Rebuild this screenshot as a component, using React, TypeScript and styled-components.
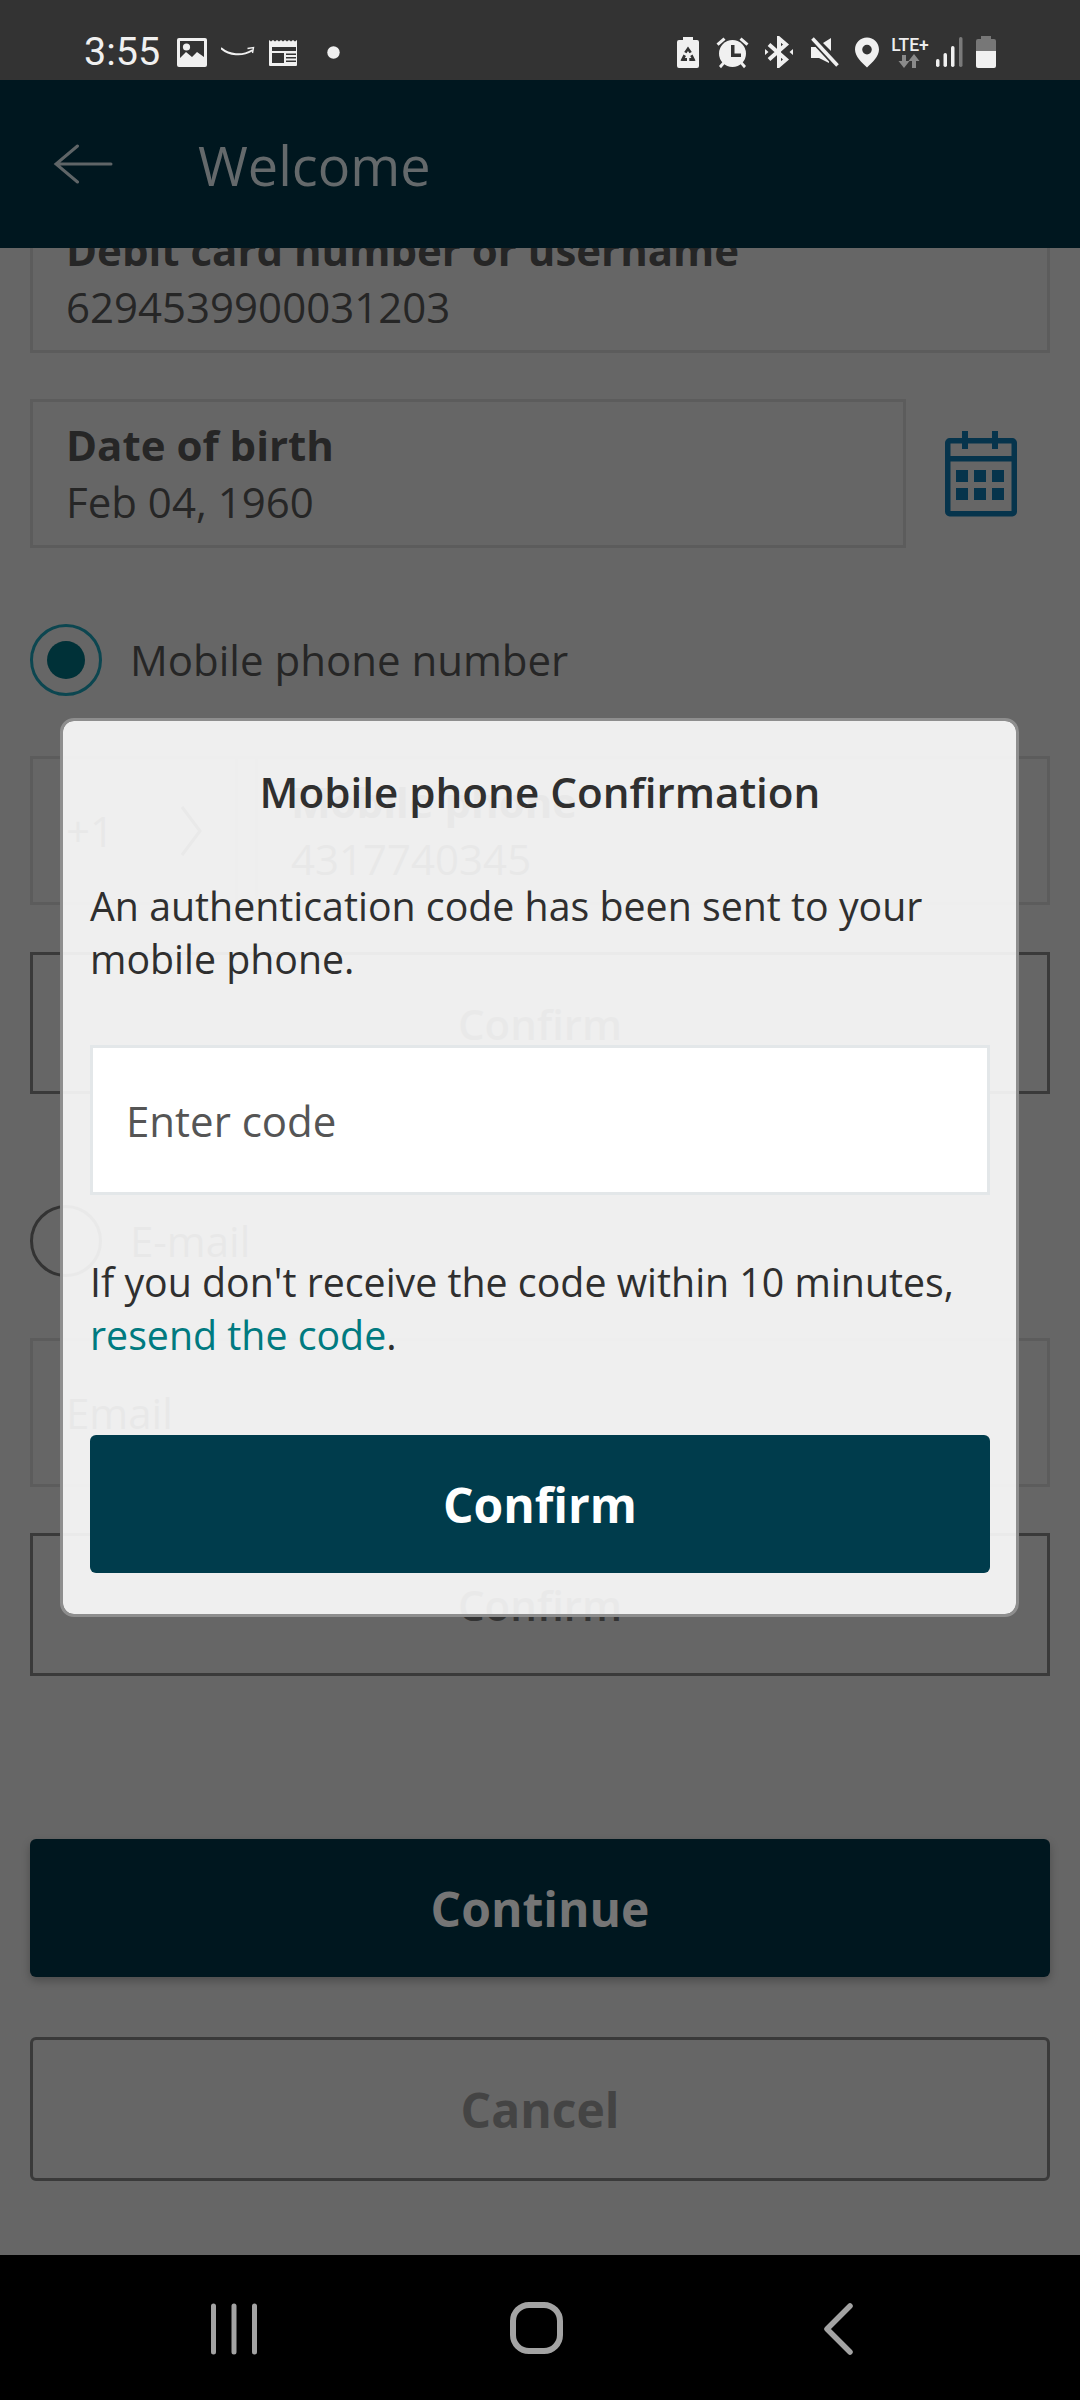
import React from "react";
import styled, { createGlobalStyle } from "styled-components";

const Global = createGlobalStyle`
  html, body { margin: 0; padding: 0; background: #666; }
  * { box-sizing: border-box; }
`;

const FONT = `"Open Sans", "Noto Sans", sans-serif`;

const Screen = styled.div`
  position: relative;
  width: 1080px;
  height: 2400px;
  overflow: hidden;
  display: flex;
  flex-direction: column;
  background: #666;
  font-family: ${FONT};
`;

const StatusBar = styled.div`
  height: 80px;
  flex: none;
  background: #333;
  display: flex;
  align-items: center;
  justify-content: space-between;
  padding: 24px 84px 0 84px;
  position: relative;
  z-index: 2;
`;
const StatusGroup = styled.div`
  display: flex;
  align-items: center;
`;
const Time = styled.span`
  font-family: Roboto, sans-serif;
  font-size: 39.5px;
  line-height: 44px;
  color: #f0f0f0;
  width: 93px;
`;
const StatusIcon = styled.svg<{ $ml?: number }>`
  display: block;
  flex: none;
  margin-left: ${(p) => p.$ml ?? 0}px;
`;
const Lte = styled.div`
  width: 36px;
  margin-left: 13px;
  display: flex;
  flex-direction: column;
  align-items: center;
`;
const LteText = styled.span`
  font-family: Roboto, sans-serif;
  font-size: 17.5px;
  line-height: 17px;
  font-weight: 500;
  color: #eee;
  white-space: nowrap;
`;

const Header = styled.header`
  height: 168px;
  flex: none;
  background: #00171f;
  display: flex;
  align-items: center;
  padding: 0 0 0 53px;
  position: relative;
  z-index: 2;
`;
const HeaderTitle = styled.h1`
  margin: 0 0 -2px 84px;
  font-size: 54px;
  line-height: 64px;
  font-weight: 400;
  color: #64696b;
`;

const Main = styled.main`
  flex: 1;
  min-height: 0;
  overflow: hidden;
`;
const Form = styled.div`
  margin-top: -44px;
  padding: 0 30px;
  display: flex;
  flex-direction: column;
`;
const FieldBox = styled.div<{ $mt?: number; $w?: number }>`
  height: 149px;
  margin-top: ${(p) => p.$mt ?? 0}px;
  width: ${(p) => (p.$w ? `${p.$w}px` : "100%")};
  flex: none;
  border: 3px solid #5c5c5c;
  padding: 0 33px;
  display: flex;
  flex-direction: column;
  justify-content: center;
`;
const Label = styled.div`
  font-size: 42px;
  line-height: 56px;
  font-weight: 700;
  color: #262626;
`;
const Value = styled.div`
  font-size: 42px;
  line-height: 58px;
  color: #262626;
`;
const DateRow = styled.div`
  margin-top: 46px;
  display: flex;
  align-items: center;
`;
const CalendarWrap = styled.div`
  margin-left: 39px;
  display: flex;
`;
const RadioRow = styled.div<{ $mt: number }>`
  margin-top: ${(p) => p.$mt}px;
  height: 72px;
  display: flex;
  align-items: center;
`;
const Radio = styled.div<{ $on?: boolean }>`
  width: 72px;
  height: 72px;
  flex: none;
  border-radius: 50%;
  border: 3px solid ${(p) => (p.$on ? "#0c4650" : "#333")};
  display: flex;
  align-items: center;
  justify-content: center;
  &::after {
    content: "";
    display: ${(p) => (p.$on ? "block" : "none")};
    width: 38px;
    height: 38px;
    border-radius: 50%;
    background: #003138;
  }
`;
const RadioLabel = styled.span`
  margin-left: 28px;
  font-size: 42px;
  line-height: 56px;
  color: #262626;
`;
const PhoneBox = styled.div`
  margin-top: 60px;
  height: 149px;
  flex: none;
  border: 3px solid #5c5c5c;
  display: flex;
`;
const Country = styled.div`
  width: 205px;
  flex: none;
  padding-left: 33px;
  border-right: 3px solid #5c5c5c;
  display: flex;
  align-items: center;
  justify-content: space-between;
  padding-right: 33px;
  font-size: 42px;
  color: #262626;
`;
const PhoneField = styled.div`
  margin-left: 17px;
  flex: 1;
  border-left: 3px solid #5c5c5c;
  padding-left: 33px;
  display: flex;
  flex-direction: column;
  justify-content: center;
`;
const OutlineButton = styled.div<{ $rounded?: boolean; $mt: number; $h: number }>`
  margin-top: ${(p) => p.$mt}px;
  height: ${(p) => p.$h}px;
  flex: none;
  border: 3px solid #3a3a3a;
  border-radius: ${(p) => (p.$rounded ? 6 : 0)}px;
  display: flex;
  align-items: center;
  justify-content: center;
  font-size: 48px;
  font-weight: 700;
  color: #444;
`;
const SolidDim = styled.div`
  margin-top: 163px;
  height: 138px;
  flex: none;
  border-radius: 6px;
  background: #00171f;
  box-shadow: 0 4px 8px rgba(0, 0, 0, 0.25);
  display: flex;
  align-items: center;
  justify-content: center;
  font-size: 48px;
  font-weight: 700;
  color: #757575;
`;
const GhostConfirm = styled.span`
  font-size: 42px;
  font-weight: 600;
  color: #333;
`;

const NavBar = styled.nav`
  height: 145px;
  flex: none;
  background: #000;
  display: flex;
  align-items: center;
  padding: 3px 0 0 204px;
  gap: 243px;
  position: relative;
  z-index: 2;
`;

const Modal = styled.section`
  position: absolute;
  left: 60px;
  top: 718px;
  width: 959px;
  height: 899px;
  z-index: 3;
  border: 3px solid #8e8e8e;
  border-radius: 14px;
  background: rgba(255, 255, 255, 0.895);
  background-clip: padding-box;
  padding: 43px 26px 0 27px;
`;
const ModalTitle = styled.h2`
  margin: 0;
  text-align: center;
  font-size: 42.2px;
  line-height: 56px;
  font-weight: 600;
  color: #2f2f2f;
`;
const ModalText = styled.p<{ $mt: number }>`
  margin: ${(p) => p.$mt}px 0 0;
  font-size: 39.3px;
  line-height: 53px;
  color: #2f2f2f;
`;
const ResendLink = styled.a`
  color: #007a80;
  text-decoration: none;
`;
const CodeInput = styled.div`
  margin-top: 59px;
  height: 150px;
  border: 3px solid #e3e7e9;
  background: #fff;
  padding-left: 33px;
  display: flex;
  align-items: center;
  font-size: 42px;
  color: #555;
`;
const ConfirmButton = styled.div`
  margin-top: 73px;
  height: 138px;
  border-radius: 6px;
  background: #003c4c;
  display: flex;
  align-items: center;
  justify-content: center;
  font-size: 48px;
  font-weight: 700;
  color: #fff;
`;

const W = "#f0f0f0";
const BG = "#333";

export default function App() {
  return (
    <Screen>
      <Global />
      <StatusBar>
        <StatusGroup>
          <Time>3:55</Time>
          <StatusIcon width="30" height="29" viewBox="0 0 30 29">
            <rect width="30" height="29" rx="2" fill={W} />
            <rect x="3" y="3" width="24" height="23" fill={BG} />
            <circle cx="9.500" cy="9" r="3.600" fill={W} />
            <path d="M3 26v-6l6-6 6 5 5-5 7 5v7z" fill={W} />
          </StatusIcon>
          <StatusIcon $ml={14} width="34" height="12" viewBox="0 0 34 12">
            <path d="M0.500 2.500C8 9 21 10.500 31 4.500" stroke={W} strokeWidth="2" fill="none" strokeLinecap="round" />
            <path d="M26.500 2.500l6-1-1 5.500" stroke={W} strokeWidth="1.400" fill="none" />
          </StatusIcon>
          <StatusIcon $ml={14} width="30" height="27" viewBox="0 0 30 27">
            <path d="M0 26V1l2 1.500 2-1.500 2 1.500 2-1.500 2 1.500 2-1.500 2 1.500 2-1.500 2 1.500 2-1.500 2 1.500 2-1.500 2 1.500 2-1.500V26a1 1 0 0 1-1 1H1a1 1 0 0 1-1-1z" fill={W} />
            <rect x="3" y="8" width="24" height="4" fill={BG} />
            <rect x="3" y="14" width="12" height="10" fill={BG} />
            <path d="M17 14.500h10v1.600H17zM17 18h10v1.600H17zM17 21.500h10v1.600H17z" fill={BG} />
          </StatusIcon>
          <StatusIcon $ml={28} width="13" height="13" viewBox="0 0 13 13">
            <circle cx="6.500" cy="6.500" r="6.200" fill={W} />
          </StatusIcon>
        </StatusGroup>
        <StatusGroup>
          <StatusIcon width="22" height="31" viewBox="0 0 22 31">
            <path d="M6 0h10v3h4a2 2 0 0 1 2 2v24a2 2 0 0 1-2 2H2a2 2 0 0 1-2-2V5a2 2 0 0 1 2-2h4z" fill={W} />
            <path d="M11 9.500l3.800 5.500-2.300 1.300L11 14l-1.500 2.300L7.200 15zM3.500 23.500l3-6 2.500 1.500-1.200 2H10v3H4.500zM18.500 23.500l-3-6-2.300 1.500 1.200 2H12.300v3h5.200z" fill={BG} />
          </StatusIcon>
          <StatusIcon $ml={17} width="33" height="33" viewBox="0 0 33 33">
            <circle cx="16.500" cy="17.500" r="13.500" fill={W} />
            <path d="M15 9h3.500v8.500H25V21H15z" fill={BG} />
            <path d="M0.500 7.500L7.500 1.500l2 2.300-7 6zM32.500 7.500L25.500 1.500l-2 2.300 7 6z" fill={W} />
            <path d="M3 30l4-4.500 2.200 1.800-4.200 5zM30 30l-4-4.500-2.200 1.800 4.200 5z" fill={W} />
          </StatusIcon>
          <StatusIcon $ml={16} width="28" height="32" viewBox="0 0 28 32">
            <path d="M4 8.500L21 23.500l-7 6V2.500l7 6L4 23.500" stroke={W} strokeWidth="4" fill="none" />
            <path d="M0 13l3.500 3L0 19zM28 13l-3.500 3 3.500 3z" fill={W} />
          </StatusIcon>
          <StatusIcon $ml={18} width="28" height="31" viewBox="0 0 28 31">
            <path d="M0 10h5L18 23v3L8 21H0zM20 1v13l-8-8z" fill={W} />
            <path d="M1.500 1.500l25 27" stroke={BG} strokeWidth="7" />
            <path d="M1.500 1.500l25 27" stroke={W} strokeWidth="3.600" />
          </StatusIcon>
          <StatusIcon $ml={16} width="24" height="31" viewBox="0 0 25 31">
            <path fillRule="evenodd" d="M12.500 0C5.600 0 0 5.500 0 12.300 0 19.500 7 26 12.500 31 18 26 25 19.500 25 12.300 25 5.500 19.400 0 12.500 0zm0 7.500a5 5 0 1 1 0 10 5 5 0 0 1 0-10z" fill={W} />
          </StatusIcon>
          <Lte>
            <LteText>LTE+</LteText>
            <StatusIcon width="24" height="14" viewBox="0 0 24 14">
              <path d="M4 1h4v6h3.500L6 14 .5 7H4z" fill="#8a8a8a" />
              <path d="M18 14h-4V7h-3.500L16 0l5.500 7H18z" fill="#8a8a8a" />
            </StatusIcon>
          </Lte>
          <StatusIcon $ml={8} width="27" height="30" viewBox="0 0 27 30">
            <rect x="0" y="22" width="3.500" height="8" rx="1.700" fill={W} />
            <rect x="7.500" y="16" width="3.500" height="14" rx="1.700" fill={W} />
            <rect x="15" y="9" width="3.500" height="21" rx="1.700" fill={W} />
            <rect x="23" y="0" width="3.500" height="30" rx="1.700" fill="#7a7a7a" />
          </StatusIcon>
          <StatusIcon $ml={13} width="20" height="32" viewBox="0 0 20 32">
            <path d="M5 0h10v3h3a2 2 0 0 1 2 2v10H0V5a2 2 0 0 1 2-2h3z" fill="#777" />
            <path d="M0 15h20v15a2 2 0 0 1-2 2H2a2 2 0 0 1-2-2z" fill={W} />
          </StatusIcon>
        </StatusGroup>
      </StatusBar>

      <Header>
        <svg width="61" height="40" viewBox="0 0 61 40" style={{ display: "block" }}>
          <path d="M58 20H3M24.500 2L3 20l21.500 18" stroke="#5f6567" strokeWidth="3" fill="none" strokeLinecap="round" />
        </svg>
        <HeaderTitle>Welcome</HeaderTitle>
      </Header>

      <Main>
        <Form>
          <FieldBox>
            <Label>Debit card number or username</Label>
            <Value>6294539900031203</Value>
          </FieldBox>
          <DateRow>
            <FieldBox $w={876}>
              <Label>Date of birth</Label>
              <Value>Feb 04, 1960</Value>
            </FieldBox>
            <CalendarWrap>
              <svg width="72" height="86" viewBox="0 0 72 86">
                <rect x="2.750" y="9.750" width="66.500" height="73" rx="2" fill="none" stroke="#06344c" strokeWidth="5.500" />
                <rect x="2" y="25" width="68" height="5.500" fill="#06344c" />
                <rect x="17" y="0" width="6" height="18" fill="#06344c" />
                <rect x="47" y="0" width="6" height="18" fill="#06344c" />
                <path d="M11 39h12v12H11zM29 39h12v12H29zM47 39h12v12H47zM11 57h12v12H11zM29 57h12v12H29zM47 57h12v12H47z" fill="#06344c" />
              </svg>
            </CalendarWrap>
          </DateRow>
          <RadioRow $mt={76}>
            <Radio $on />
            <RadioLabel>Mobile phone number</RadioLabel>
          </RadioRow>
          <PhoneBox>
            <Country>
              <span>+1</span>
              <svg width="22" height="52" viewBox="0 0 22 52">
                <path d="M2 2l18 24L2 50" stroke="#333" strokeWidth="3" fill="none" />
              </svg>
            </Country>
            <PhoneField>
              <Label>Mobile phone</Label>
              <Value>4317740345</Value>
            </PhoneField>
          </PhoneBox>
          <OutlineButton $mt={47} $h={142}>
            <GhostConfirm>Confirm</GhostConfirm>
          </OutlineButton>
          <RadioRow $mt={111}>
            <Radio />
            <RadioLabel>E-mail</RadioLabel>
          </RadioRow>
          <FieldBox $mt={61}>
            <Value>Email</Value>
          </FieldBox>
          <OutlineButton $mt={46} $h={143}>
            <GhostConfirm>Confirm</GhostConfirm>
          </OutlineButton>
          <SolidDim>Continue</SolidDim>
          <OutlineButton $rounded $mt={60} $h={144}>
            Cancel
          </OutlineButton>
        </Form>
      </Main>

      <NavBar>
        <svg width="60" height="60" viewBox="0 0 60 60">
          <path d="M9.500 7v46M30 7v46M50.500 7v46" stroke="#a3a3a3" strokeWidth="5" strokeLinecap="round" />
        </svg>
        <svg width="60" height="60" viewBox="0 0 60 60">
          <rect x="6" y="6" width="47" height="46" rx="16" fill="none" stroke="#a3a3a3" strokeWidth="6" />
        </svg>
        <svg width="60" height="60" viewBox="0 0 60 60">
          <path d="M40 7L17 30l23 23" stroke="#a3a3a3" strokeWidth="5.500" fill="none" strokeLinecap="round" strokeLinejoin="round" />
        </svg>
      </NavBar>

      <Modal>
        <ModalTitle>Mobile phone Confirmation</ModalTitle>
        <ModalText $mt={60}>An authentication code has been sent to your mobile phone.</ModalText>
        <CodeInput>Enter code</CodeInput>
        <ModalText $mt={61}>
          If you don't receive the code within 10 minutes, <ResendLink>resend the code</ResendLink>.
        </ModalText>
        <ConfirmButton>Confirm</ConfirmButton>
      </Modal>
    </Screen>
  );
}
